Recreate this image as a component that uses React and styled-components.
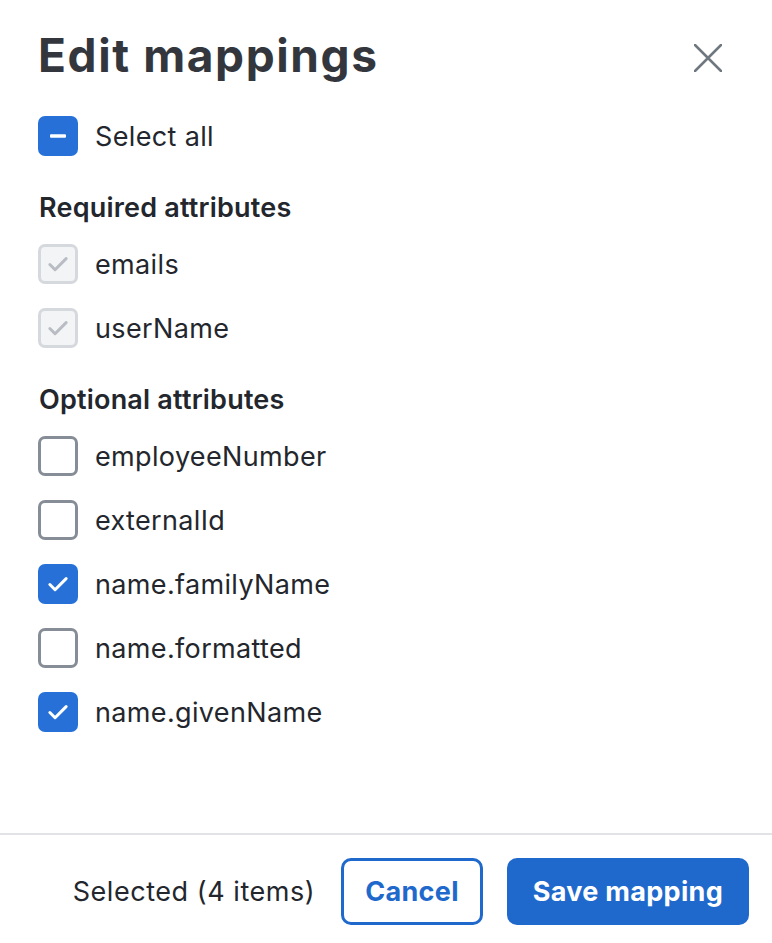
import styled, { createGlobalStyle } from "styled-components";

const GlobalStyle = createGlobalStyle`
  html, body {
    margin: 0;
    padding: 0;
    background: #fff;
  }
  body {
    font-family: "Inter", "Noto Sans", sans-serif;
    color: #23272d;
  }
`;

const Dialog = styled.div`
  width: 772px;
  height: 943px;
  display: flex;
  flex-direction: column;
  box-sizing: border-box;
`;

const Header = styled.header`
  display: flex;
  justify-content: space-between;
  align-items: flex-start;
  padding: 27px 44px 0 38px;
`;

const Title = styled.h1`
  margin: 0;
  font-size: 46px;
  line-height: 56px;
  font-weight: 700;
  color: #33373d;
  letter-spacing: 1.6px;
`;

const CloseButton = styled.button`
  border: none;
  background: none;
  padding: 0;
  width: 40px;
  height: 40px;
  margin-top: 11px;
  display: flex;
  align-items: center;
  justify-content: center;
  cursor: pointer;
`;

const Body = styled.div`
  flex: 1;
  padding: 21px 39px 0 38px;
  display: flex;
  flex-direction: column;
`;

const Row = styled.label`
  display: flex;
  align-items: center;
  gap: 17px;
  height: 64px;
  font-size: 27px;
  letter-spacing: 0.35px;
  color: #23272d;
  cursor: pointer;
`;

const Box = styled.span`
  width: 40px;
  height: 40px;
  box-sizing: border-box;
  border-radius: 7px;
  display: flex;
  align-items: center;
  justify-content: center;
  flex-shrink: 0;
  background: ${(p) =>
    p.$state === "checked" || p.$state === "mixed"
      ? "#2670d8"
      : p.$state === "disabled"
      ? "#f3f4f6"
      : "#fff"};
  border: ${(p) =>
    p.$state === "checked" || p.$state === "mixed"
      ? "none"
      : p.$state === "disabled"
      ? "3px solid #d5d8dc"
      : "3px solid #868d96"};
`;

const SectionTitle = styled.h2`
  margin: 0;
  height: 64px;
  display: flex;
  align-items: flex-end;
  padding: 0 0 8px 1px;
  box-sizing: border-box;
  font-size: 27px;
  line-height: 32px;
  font-weight: 600;
  letter-spacing: 0.2px;
  color: #23272d;
`;

const Footer = styled.footer`
  border-top: 2px solid #e1e3e6;
  height: 110px;
  box-sizing: border-box;
  padding: 5px 23px 0 0;
  display: flex;
  align-items: center;
  justify-content: flex-end;
  gap: 24px;
`;

const Count = styled.span`
  font-size: 27px;
  letter-spacing: 0.55px;
  color: #23272d;
  margin-right: 2px;
`;

const Button = styled.button`
  height: 67px;
  box-sizing: border-box;
  border-radius: 10px;
  font-family: "Inter", sans-serif;
  font-size: 27px;
  font-weight: 700;
  letter-spacing: 0.3px;
  cursor: pointer;
  padding: 0 ${(p) => (p.$primary ? "23px" : "21px")};
  border: 3px solid #1f69cc;
  background: ${(p) => (p.$primary ? "#1f69cc" : "#fff")};
  color: ${(p) => (p.$primary ? "#fff" : "#1f69cc")};
`;

const Check = ({ color }) => (
  <svg width="26" height="26" viewBox="0 0 24 24" fill="none">
    <path
      d="M4.5 12.5l4.8 4.8L19.5 7"
      stroke={color}
      strokeWidth="2.8"
      strokeLinecap="round"
      strokeLinejoin="round"
    />
  </svg>
);

const Checkbox = ({ state }) => (
  <Box $state={state}>
    {state === "checked" && <Check color="#fff" />}
    {state === "disabled" && <Check color="#b9bdc3" />}
    {state === "mixed" && (
      <svg width="24" height="24" viewBox="0 0 24 24">
        <rect x="4" y="10.3" width="16" height="3.4" rx="1" fill="#fff" />
      </svg>
    )}
  </Box>
);

const required = ["emails", "userName"];
const optional = [
  { name: "employeeNumber", on: false },
  { name: "externalId", on: false },
  { name: "name.familyName", on: true },
  { name: "name.formatted", on: false },
  { name: "name.givenName", on: true },
];

export default function App() {
  return (
    <Dialog>
      <GlobalStyle />
      <Header>
        <Title>Edit mappings</Title>
        <CloseButton aria-label="Close">
          <svg width="28" height="28" viewBox="0 0 28 28">
            <path
              d="M1 1L27 27M27 1L1 27"
              stroke="#6f7780"
              strokeWidth="2.5"
              strokeLinecap="round"
            />
          </svg>
        </CloseButton>
      </Header>
      <Body>
        <Row>
          <Checkbox state="mixed" />
          Select all
        </Row>
        <SectionTitle>Required attributes</SectionTitle>
        {required.map((r) => (
          <Row key={r}>
            <Checkbox state="disabled" />
            {r}
          </Row>
        ))}
        <SectionTitle>Optional attributes</SectionTitle>
        {optional.map((o) => (
          <Row key={o.name}>
            <Checkbox state={o.on ? "checked" : "unchecked"} />
            {o.name}
          </Row>
        ))}
      </Body>
      <Footer>
        <Count>Selected (4 items)</Count>
        <Button>Cancel</Button>
        <Button $primary>Save mapping</Button>
      </Footer>
    </Dialog>
  );
}
